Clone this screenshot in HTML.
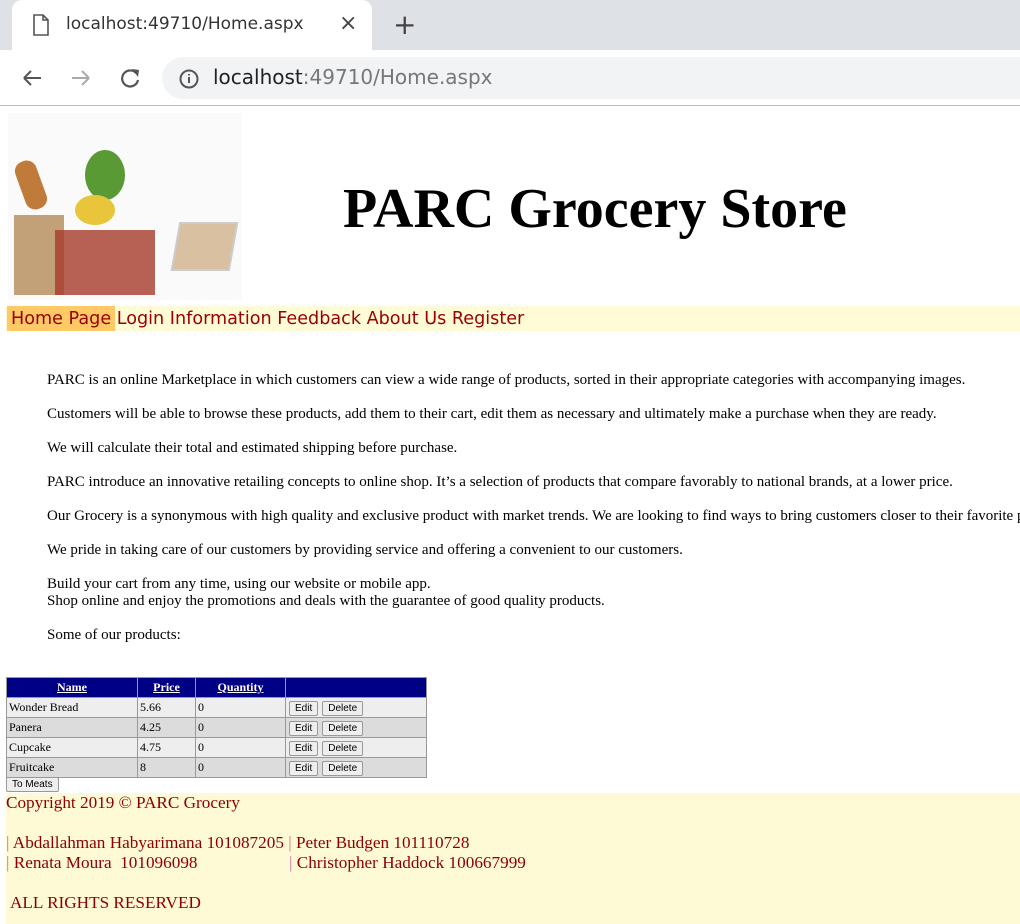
<!DOCTYPE html>
<html><head><style>
html,body{overflow:hidden}
body{margin:0;width:1020px;height:924px;overflow:hidden;background:#fff;position:relative;font-family:"Liberation Serif",serif}
.a{position:absolute;white-space:nowrap}
p{position:absolute;left:47px;margin:0;font-size:15px;line-height:17px;white-space:nowrap}
td,th{border:1px solid #999;padding:0 2px;height:19px;font-size:12px;text-align:left}
th{background:#000084;color:#fff;text-align:center;text-decoration:underline;font-weight:bold}
.b{font:10px "Liberation Sans",sans-serif;border:1px solid #999;background:#eee;padding:1px 5px;border-radius:2px;margin-left:1px}
.f{color:#8b0000;font-size:17.2px}
</style></head><body>
<div class="a" style="left:0;top:0;width:1020px;height:50px;background:#dee1e6"></div>
<div class="a" style="left:12px;top:0;width:360px;height:52px;background:#fff;border-radius:10px 10px 0 0"></div>
<svg class="a" style="left:32px;top:14px" width="18" height="22"><path d="M2 1h9l5 5v15H2z M11 1v5h5" fill="none" stroke="#555" stroke-width="1.6"/></svg>
<div class="a" style="left:66px;top:14px;font:17px 'DejaVu Sans',sans-serif;color:#333">localhost:49710/Home.aspx</div>
<div class="a" style="left:339px;top:11px;font:22px 'DejaVu Sans';color:#444">×</div>
<div class="a" style="left:393px;top:8px;font:28px 'DejaVu Sans';color:#444">+</div>
<div class="a" style="left:0;top:50px;width:1020px;height:55px;background:#fff;border-bottom:1px solid #bbb"></div>
<svg class="a" style="left:20px;top:66px" width="130" height="24"><path d="M4 12h17M4 12l7-7M4 12l7 7" stroke="#555" stroke-width="2" fill="none"/><path d="M52 12h17M69 12l-7-7M69 12l-7 7" stroke="#aaa" stroke-width="2" fill="none"/><path d="M116 7a8 8 0 1 0 2 7" stroke="#555" stroke-width="2.2" fill="none"/><path d="M112 3l7 1-1 7z" fill="#555"/></svg>
<div class="a" style="left:162px;top:57px;width:858px;height:42px;background:#f1f3f4;border-radius:21px 0 0 21px"></div>
<svg class="a" style="left:178px;top:68px" width="22" height="22"><circle cx="11" cy="11" r="8.5" fill="none" stroke="#555" stroke-width="2"/><path d="M11 9v6M11 6v1.5" stroke="#555" stroke-width="2"/></svg>
<div class="a" style="left:213px;top:65px;font:20px 'DejaVu Sans',sans-serif;color:#222">localhost<span style="color:#777">:49710/Home.aspx</span></div>
<div class="a" style="left:8px;top:113px;width:234px;height:187px;background:#fafafa"></div>
<div class="a" style="left:14px;top:215px;width:50px;height:80px;background:#c2a179"></div>
<div class="a" style="left:20px;top:160px;width:22px;height:50px;background:#c07a3a;border-radius:10px;transform:rotate(-20deg)"></div>
<div class="a" style="left:85px;top:150px;width:40px;height:50px;background:#5a9a35;border-radius:50%"></div>
<div class="a" style="left:75px;top:195px;width:40px;height:30px;background:#e8c53a;border-radius:50%"></div>
<div class="a" style="left:55px;top:230px;width:100px;height:65px;background:#a63a2a;opacity:.8"></div>
<div class="a" style="left:175px;top:222px;width:55px;height:45px;background:#d8c0a0;border:2px solid #ccc;transform:skewX(-10deg)"></div>
<div class="a" style="left:343px;top:177px;font:bold 56px 'Liberation Serif',serif">PARC Grocery Store</div>
<div class="a" style="left:6px;top:306px;width:1014px;height:25px;background:#fffbd6"></div>
<div class="a" style="left:7px;top:306px;width:108px;height:25px;background:#ffc966"></div>
<div class="a" style="left:11px;top:309px;font:17.6px 'DejaVu Sans',sans-serif;color:#990000;word-spacing:0">Home Page Login Information Feedback About Us Register</div>
<p style="top:372px">PARC is an online Marketplace in which customers can view a wide range of products, sorted in their appropriate categories with accompanying images.</p>
<p style="top:406px">Customers will be able to browse these products, add them to their cart, edit them as necessary and ultimately make a purchase when they are ready.</p>
<p style="top:440px">We will calculate their total and estimated shipping before purchase.</p>
<p style="top:474px">PARC introduce an innovative retailing concepts to online shop. It’s a selection of products that compare favorably to national brands, at a lower price.</p>
<p style="top:508px;width:973px;overflow:hidden">Our Grocery is a synonymous with high quality and exclusive product with market trends. We are looking to find ways to bring customers closer to their favorite products.</p>
<p style="top:542px">We pride in taking care of our customers by providing service and offering a convenient to our customers.</p>
<p style="top:576px">Build your cart from any time, using our website or mobile app.<br>Shop online and enjoy the promotions and deals with the guarantee of good quality products.</p>
<p style="top:627px">Some of our products:</p>
<table class="a" style="left:6px;top:677px;border-collapse:collapse;width:421px">
<tr><th style="width:126px">Name</th><th style="width:53px">Price</th><th style="width:85px">Quantity</th><th></th></tr>
<tr style="background:#eee"><td>Wonder Bread</td><td>5.66</td><td>0</td><td><span class="b">Edit</span> <span class="b">Delete</span></td></tr>
<tr style="background:#dcdcdc"><td>Panera</td><td>4.25</td><td>0</td><td><span class="b">Edit</span> <span class="b">Delete</span></td></tr>
<tr style="background:#eee"><td>Cupcake</td><td>4.75</td><td>0</td><td><span class="b">Edit</span> <span class="b">Delete</span></td></tr>
<tr style="background:#dcdcdc"><td>Fruitcake</td><td>8</td><td>0</td><td><span class="b">Edit</span> <span class="b">Delete</span></td></tr>
</table>
<div class="a b" style="left:6px;top:777px;margin:0">To Meats</div>
<div class="a" style="left:6px;top:793px;width:1014px;height:131px;background:#fffad6"></div>
<div class="a f" style="left:6px;top:793px">Copyright 2019 © PARC Grocery</div>
<div class="a f" style="left:6px;top:833px"><span style="color:#c77">|</span> Abdallahman Habyarimana 101087205 <span style="color:#c77">|</span> Peter Budgen 101110728</div>
<div class="a f" style="left:6px;top:853px"><span style="color:#c77">|</span> Renata Moura&nbsp; 101096098</div>
<div class="a f" style="left:289px;top:853px"><span style="color:#c7a">|</span> Christopher Haddock 100667999</div>
<div class="a f" style="left:10px;top:893px">ALL RIGHTS RESERVED</div>
</body></html>
